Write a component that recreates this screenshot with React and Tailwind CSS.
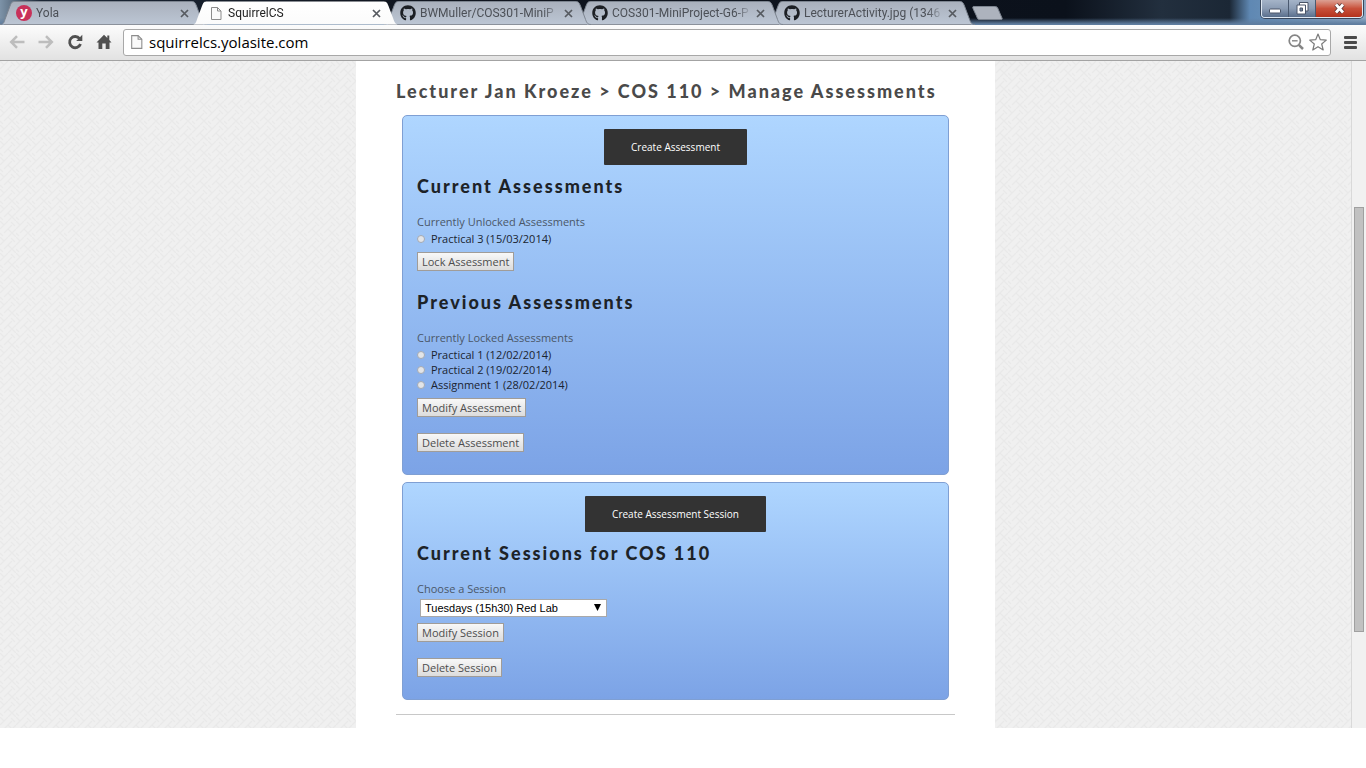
import { FaGithub } from "react-icons/fa";

const tabs = [
  { title: "Yola", icon: "yola", layer: "z-10" },
  { title: "SquirrelCS", icon: "page", active: true, layer: "z-20" },
  { title: "BWMuller/COS301-MiniP", icon: "github", layer: "z-[9]" },
  { title: "COS301-MiniProject-G6-P", icon: "github", layer: "z-[8]" },
  { title: "LecturerActivity.jpg (1346", icon: "github", layer: "z-[7]" },
];

function PageIcon({ className }) {
  return (
    <svg className={className} viewBox="0 0 12 15" fill="none" aria-hidden="true">
      <path d="M1.5 1.5H7.5L11 5V13.5H1.5Z" fill="#fafafa" stroke="#8c8c8c" />
      <path d="M7.5 1.5V5H11" stroke="#8c8c8c" />
    </svg>
  );
}

function TabIcon({ kind }) {
  if (kind === "yola") {
    return (
      <span className="flex size-4 shrink-0 items-center justify-center rounded-full bg-[#c8315a] pb-1 text-[13px] leading-3 font-bold text-white">
        y
      </span>
    );
  }
  if (kind === "github") return <FaGithub className="size-4 shrink-0 text-[#1c1f24]" />;
  return <span className="flex size-4 shrink-0 items-center justify-center"><PageIcon className="h-[15px] w-3" /></span>;
}

function Tab({ title, icon, active, layer }) {
  const shape =
    "M0 24.5C4 24.5 4 22 5.5 18L10 6C11.5 2 12.5 1.5 15 1.5H191C194 1.5 195 2 196.5 6L201 18C202.500 22 203 24.500 207 24.500";
  return (
    <div className={`relative -mr-[15px] flex h-[25px] w-[207px] shrink-0 items-center pt-px pr-[18px] pl-4 ${layer}`}>
      <svg className="absolute inset-0 size-full" viewBox="0 0 207 25" preserveAspectRatio="none" aria-hidden="true">
        <defs>
          <linearGradient id="tabActive" x1="0" y1="0" x2="0" y2="1">
            <stop offset="0" stopColor="#ffffff" />
            <stop offset="1" stopColor="#fbfbfb" />
          </linearGradient>
          <linearGradient id="tabIdle" x1="0" y1="0" x2="0" y2="1">
            <stop offset="0" stopColor="#a9b0bc" />
            <stop offset="1" stopColor="#bcc6d4" />
          </linearGradient>
        </defs>
        <path d={shape} fill={active ? "url(#tabActive)" : "url(#tabIdle)"} stroke={active ? "none" : "#7d8590"} />
        {!active && <path d="M4 24.500H203" stroke="#8b919b" />}
      </svg>
      <div className="relative flex min-w-0 flex-1 items-center gap-1">
        <TabIcon kind={icon} />
        <a
          href="#"
          className={`min-w-0 flex-1 font-['Roboto',sans-serif] text-xs leading-4 whitespace-nowrap mask-r-from-88% ${active ? "text-[#222]" : "text-[#4c5057]"}`}
        >
          {title}
        </a>
        <button type="button" aria-label={`Close ${title}`} className="flex size-[9px] items-center justify-center">
          <svg viewBox="0 0 9 9" className="size-[9px]" fill="none" stroke="#565a60" strokeWidth="1.700" aria-hidden="true">
            <path d="M1 1L8 8M8 1L1 8" />
          </svg>
        </button>
      </div>
    </div>
  );
}

function WindowControls() {
  return (
    <div className="mr-[3px] ml-auto flex h-[18px] shrink-0 overflow-hidden rounded-b-[4px] border border-t-0 border-[#dfe8f2] shadow-[0_0_0_1px_#39475b]">
      <button type="button" aria-label="Minimize" className="flex w-[27px] items-center justify-center border-r border-[#4b5a70] bg-linear-to-b from-[#a5b4c8] via-[#8b9cb4] via-50% to-[#5a6f8c]">
        <svg viewBox="0 0 14 12" className="h-3 w-3.5" aria-hidden="true">
          <rect x="1.500" y="6" width="11" height="4" rx="1" fill="#fff" stroke="#4a5568" />
        </svg>
      </button>
      <button type="button" aria-label="Restore" className="flex w-[27px] items-center justify-center border-r border-[#4b5a70] bg-linear-to-b from-[#a5b4c8] via-[#8b9cb4] via-50% to-[#5a6f8c]">
        <svg viewBox="0 0 13 13" className="size-[13px]" aria-hidden="true">
          <path d="M3.500 0.500H12V9H3.500Z" fill="#fff" stroke="#4a5568" />
          <path d="M1 3H9.500V12H1Z" fill="#fff" stroke="#4a5568" />
          <path d="M4 6H6.500V9H4Z" fill="#7588a1" stroke="#4a5568" />
        </svg>
      </button>
      <button type="button" aria-label="Close" className="flex w-[46px] items-center justify-center bg-linear-to-b from-[#dba093] via-[#c8503a] via-50% to-[#b4321c]">
        <svg viewBox="0 0 13 12" className="h-3 w-[13px]" fill="none" aria-hidden="true">
          <path d="M3 1.500L10 9.500M10 1.500L3 9.500" stroke="#5d3a3a" strokeWidth="4.500" />
          <path d="M3 1.500L10 9.500M10 1.500L3 9.500" stroke="#fff" strokeWidth="2.700" />
        </svg>
      </button>
    </div>
  );
}

function TitleBar() {
  return (
    <div className="flex h-[25px] items-start bg-[linear-gradient(to_bottom,transparent_72%,#5f7d9f_96%),linear-gradient(to_right,#7d93a8_0,#1b2635_3%,#10151f_30%,#0b111b_78%,#222f3e_85%,#1b2735_90%,#5f88b3_91.500%,#8fa9c4_100%)]">
      <div className="flex pr-[15px]">
        {tabs.map((tab) => (
          <Tab key={tab.title} {...tab} />
        ))}
      </div>
      <button type="button" aria-label="New tab" className="-ml-1 pt-[5px]">
        <svg viewBox="0 0 32 16" className="h-4 w-8" aria-hidden="true">
          <path d="M3 1.500H23C26 1.500 26.500 2 27.500 5L31 13C31.500 14.500 31 14.500 29.500 14.500H9C7 14.500 6.500 14 5.500 11L2 3.500C1.500 2 1.500 1.500 3 1.500Z" fill="#adb3bd" stroke="#7d8590" />
        </svg>
      </button>
      <WindowControls />
    </div>
  );
}

function NavArrow({ label, flip }) {
  return (
    <button type="button" aria-label={label} className="flex size-4 items-center justify-center">
      <svg viewBox="0 0 16 14" className={flip ? "h-3.5 w-4 -scale-x-100" : "h-3.5 w-4"} fill="none" stroke="#bdbdbd" strokeWidth="2.500" aria-hidden="true">
        <path d="M15.500 7H2.500M8 1.200L2.200 7L8 12.800" />
      </svg>
    </button>
  );
}

function Toolbar() {
  return (
    <div className="flex h-9 items-center border-b border-[#a3a3a3] bg-linear-to-b from-[#fcfcfc] to-[#e2e2e2] pr-[9px] pb-px pl-[9px]">
      <div className="flex items-center gap-[13px]">
        <NavArrow label="Back" />
        <NavArrow label="Forward" flip />
        <button type="button" aria-label="Reload">
          <svg viewBox="0 0 16 16" className="size-4" aria-hidden="true">
            <path d="M12.600 4.600A5.600 5.600 0 1 0 13.500 10" fill="none" stroke="#505050" strokeWidth="2.800" />
            <path d="M15.300 0.800V7H9.200Z" fill="#505050" />
          </svg>
        </button>
        <button type="button" aria-label="Home">
          <svg viewBox="0 0 16 16" className="size-4" fill="#505050" aria-hidden="true">
            <path d="M8 0.800L11.300 4V1.500H13.300V6L15.500 8.500H13.500V15H9.700V9.500H6.300V15H2.500V8.500H0.500Z" />
          </svg>
        </button>
      </div>
      <div className="ml-[11px] flex h-[27px] flex-1 items-center rounded-[3px] border border-[#a8a8a8] bg-white pr-[3px] pl-[5px]">
        <PageIcon className="mr-[5px] h-4 w-[15px]" />
        <input
          aria-label="Address"
          defaultValue="squirrelcs.yolasite.com"
          className="min-w-0 flex-1 bg-transparent text-[15px] leading-5 text-black outline-none"
        />
        <button type="button" aria-label="Zoom out">
          <svg viewBox="0 0 16 16" className="size-4" fill="none" stroke="#858585" aria-hidden="true">
            <circle cx="6.800" cy="6.800" r="5.600" strokeWidth="1.700" />
            <path d="M4 6.800H9.600" strokeWidth="1.400" />
            <path d="M10.800 10.800L15 15" strokeWidth="2.500" />
          </svg>
        </button>
        <button type="button" aria-label="Bookmark this page" className="ml-[5px]">
          <svg viewBox="0 0 18 18" className="size-[18px]" fill="#fff" stroke="#7b7b7b" strokeWidth="1.200" strokeLinejoin="round" aria-hidden="true">
            <path d="M9 1L11.300 6.700L17.300 7.100L12.700 11L14.200 17L9 13.700L3.800 17L5.300 11L0.700 7.100L6.700 6.700Z" />
          </svg>
        </button>
      </div>
      <button type="button" aria-label="Menu" className="ml-[13px] flex w-[13px] flex-col gap-[2px]">
        <span className="h-[3px] rounded-[1px] bg-[#4a4a4a]" />
        <span className="h-[3px] rounded-[1px] bg-[#4a4a4a]" />
        <span className="h-[3px] rounded-[1px] bg-[#4a4a4a]" />
      </button>
    </div>
  );
}

function Weave() {
  return (
    <svg className="absolute inset-0 size-full" aria-hidden="true">
      <defs>
        <pattern id="weave" width="16" height="16" patternUnits="userSpaceOnUse">
          <path
            d="M0 8L8 0M4 12L12 4M8 16L16 8M0 0L4 4M12 12L16 16M8 8L14 14M0 12L3 15M11 1L15 5"
            fill="none"
            stroke="#e9e9e9"
            strokeWidth="1.300"
          />
        </pattern>
      </defs>
      <rect width="100%" height="100%" fill="url(#weave)" />
    </svg>
  );
}

function Panel({ children }) {
  return (
    <section className="mx-1.5 rounded-[5px] border border-[#7f9fd3] bg-linear-to-b from-[#afd6ff] to-[#7ca3e6] px-3.5 pt-[13px] pb-[22px]">
      {children}
    </section>
  );
}

function DarkButton({ children }) {
  return (
    <div className="flex justify-center">
      <button type="button" className="h-9 rounded-[1px] bg-[#333] px-[27px] text-[10px] leading-4 text-white">
        {children}
      </button>
    </div>
  );
}

function SmallButton({ children }) {
  return (
    <button
      type="button"
      className="block h-[19px] border border-[#a09c98] bg-linear-to-b from-[#f8f8f8] to-[#dcdcdc] px-1 text-[11px] leading-4 text-[#4d4d4d]"
    >
      {children}
    </button>
  );
}

function Heading({ children }) {
  return (
    <h2 className="font-['Lato',sans-serif] text-lg leading-6 font-black tracking-[2px] text-[#1d2328]">
      {children}
    </h2>
  );
}

function Options({ legend, name, items }) {
  return (
    <fieldset className="mt-4">
      <legend className="text-[11px] leading-4 text-[#4a5768]">{legend}</legend>
      <div className="mt-px">
        {items.map((item) => (
          <label key={item} className="flex h-[15px] items-center gap-1.5 text-[11px] leading-[15px] text-[#1a2430]">
            <input
              type="radio"
              name={name}
              className="size-2 appearance-none rounded-full border border-[#a3a9b3] bg-[#e3e5e8] checked:bg-[#444]"
            />
            {item}
          </label>
        ))}
      </div>
    </fieldset>
  );
}

export default function App() {
  return (
    <div className="flex min-h-screen flex-col bg-white pb-10 font-['Open_Sans',sans-serif]">
      <header>
        <TitleBar />
        <Toolbar />
      </header>
      <div className="flex flex-1">
        <div className="relative flex flex-1 justify-center bg-[#f0f0f0]">
          <Weave />
          <main className="relative w-full max-w-[639px] bg-white px-10 pt-[18px] pb-3">
            <h1 className="mb-3 font-['Lato',sans-serif] text-lg leading-6 font-black tracking-[2px] text-[#4a4a4a]">
              Lecturer Jan Kroeze &gt; COS 110 &gt; Manage Assessments
            </h1>
            <Panel>
              <DarkButton>Create Assessment</DarkButton>
              <div className="mt-[9px]">
                <Heading>Current Assessments</Heading>
                <Options legend="Currently Unlocked Assessments" name="unlocked" items={["Practical 3 (15/03/2014)"]} />
                <div className="mt-1.5">
                  <SmallButton>Lock Assessment</SmallButton>
                </div>
              </div>
              <div className="mt-[19px]">
                <Heading>Previous Assessments</Heading>
                <Options
                  legend="Currently Locked Assessments"
                  name="locked"
                  items={["Practical 1 (12/02/2014)", "Practical 2 (19/02/2014)", "Assignment 1 (28/02/2014)"]}
                />
                <div className="mt-1.5 flex flex-col items-start gap-4">
                  <SmallButton>Modify Assessment</SmallButton>
                  <SmallButton>Delete Assessment</SmallButton>
                </div>
              </div>
            </Panel>
            <div className="h-[7px]" />
            <Panel>
              <DarkButton>Create Assessment Session</DarkButton>
              <div className="mt-[9px]">
                <Heading>Current Sessions for COS 110</Heading>
                <label htmlFor="session" className="mt-4 block text-[11px] leading-4 text-[#4a5768]">
                  Choose a Session
                </label>
                <div className="relative mt-[2px] ml-[3px] w-[187px]">
                  <select
                    id="session"
                    className="block h-[18px] w-full appearance-none border border-[#a9a9a9] bg-white pl-1 font-['Liberation_Sans',sans-serif] text-[11px] leading-4 text-black"
                  >
                    <option>Tuesdays (15h30) Red Lab</option>
                  </select>
                  <svg viewBox="0 0 7 7" className="pointer-events-none absolute top-[5px] right-1.5 size-[7px]" aria-hidden="true">
                    <path d="M0 0H7L3.500 7Z" fill="#000" />
                  </svg>
                </div>
                <div className="mt-1.5 flex flex-col items-start gap-4">
                  <SmallButton>Modify Session</SmallButton>
                  <SmallButton>Delete Session</SmallButton>
                </div>
              </div>
            </Panel>
            <hr className="mt-3.5 border-[#c8c8c8]" />
          </main>
        </div>
        <div className="flex w-[15px] flex-col border-l border-[#d9d9d9] bg-[#f1f1f1] px-0.5" aria-hidden="true">
          <div className="flex-[146]" />
          <div className="flex-[425] border border-[#a0a0a0] bg-[#c1c1c1]" />
          <div className="flex-[96]" />
        </div>
      </div>
    </div>
  );
}
